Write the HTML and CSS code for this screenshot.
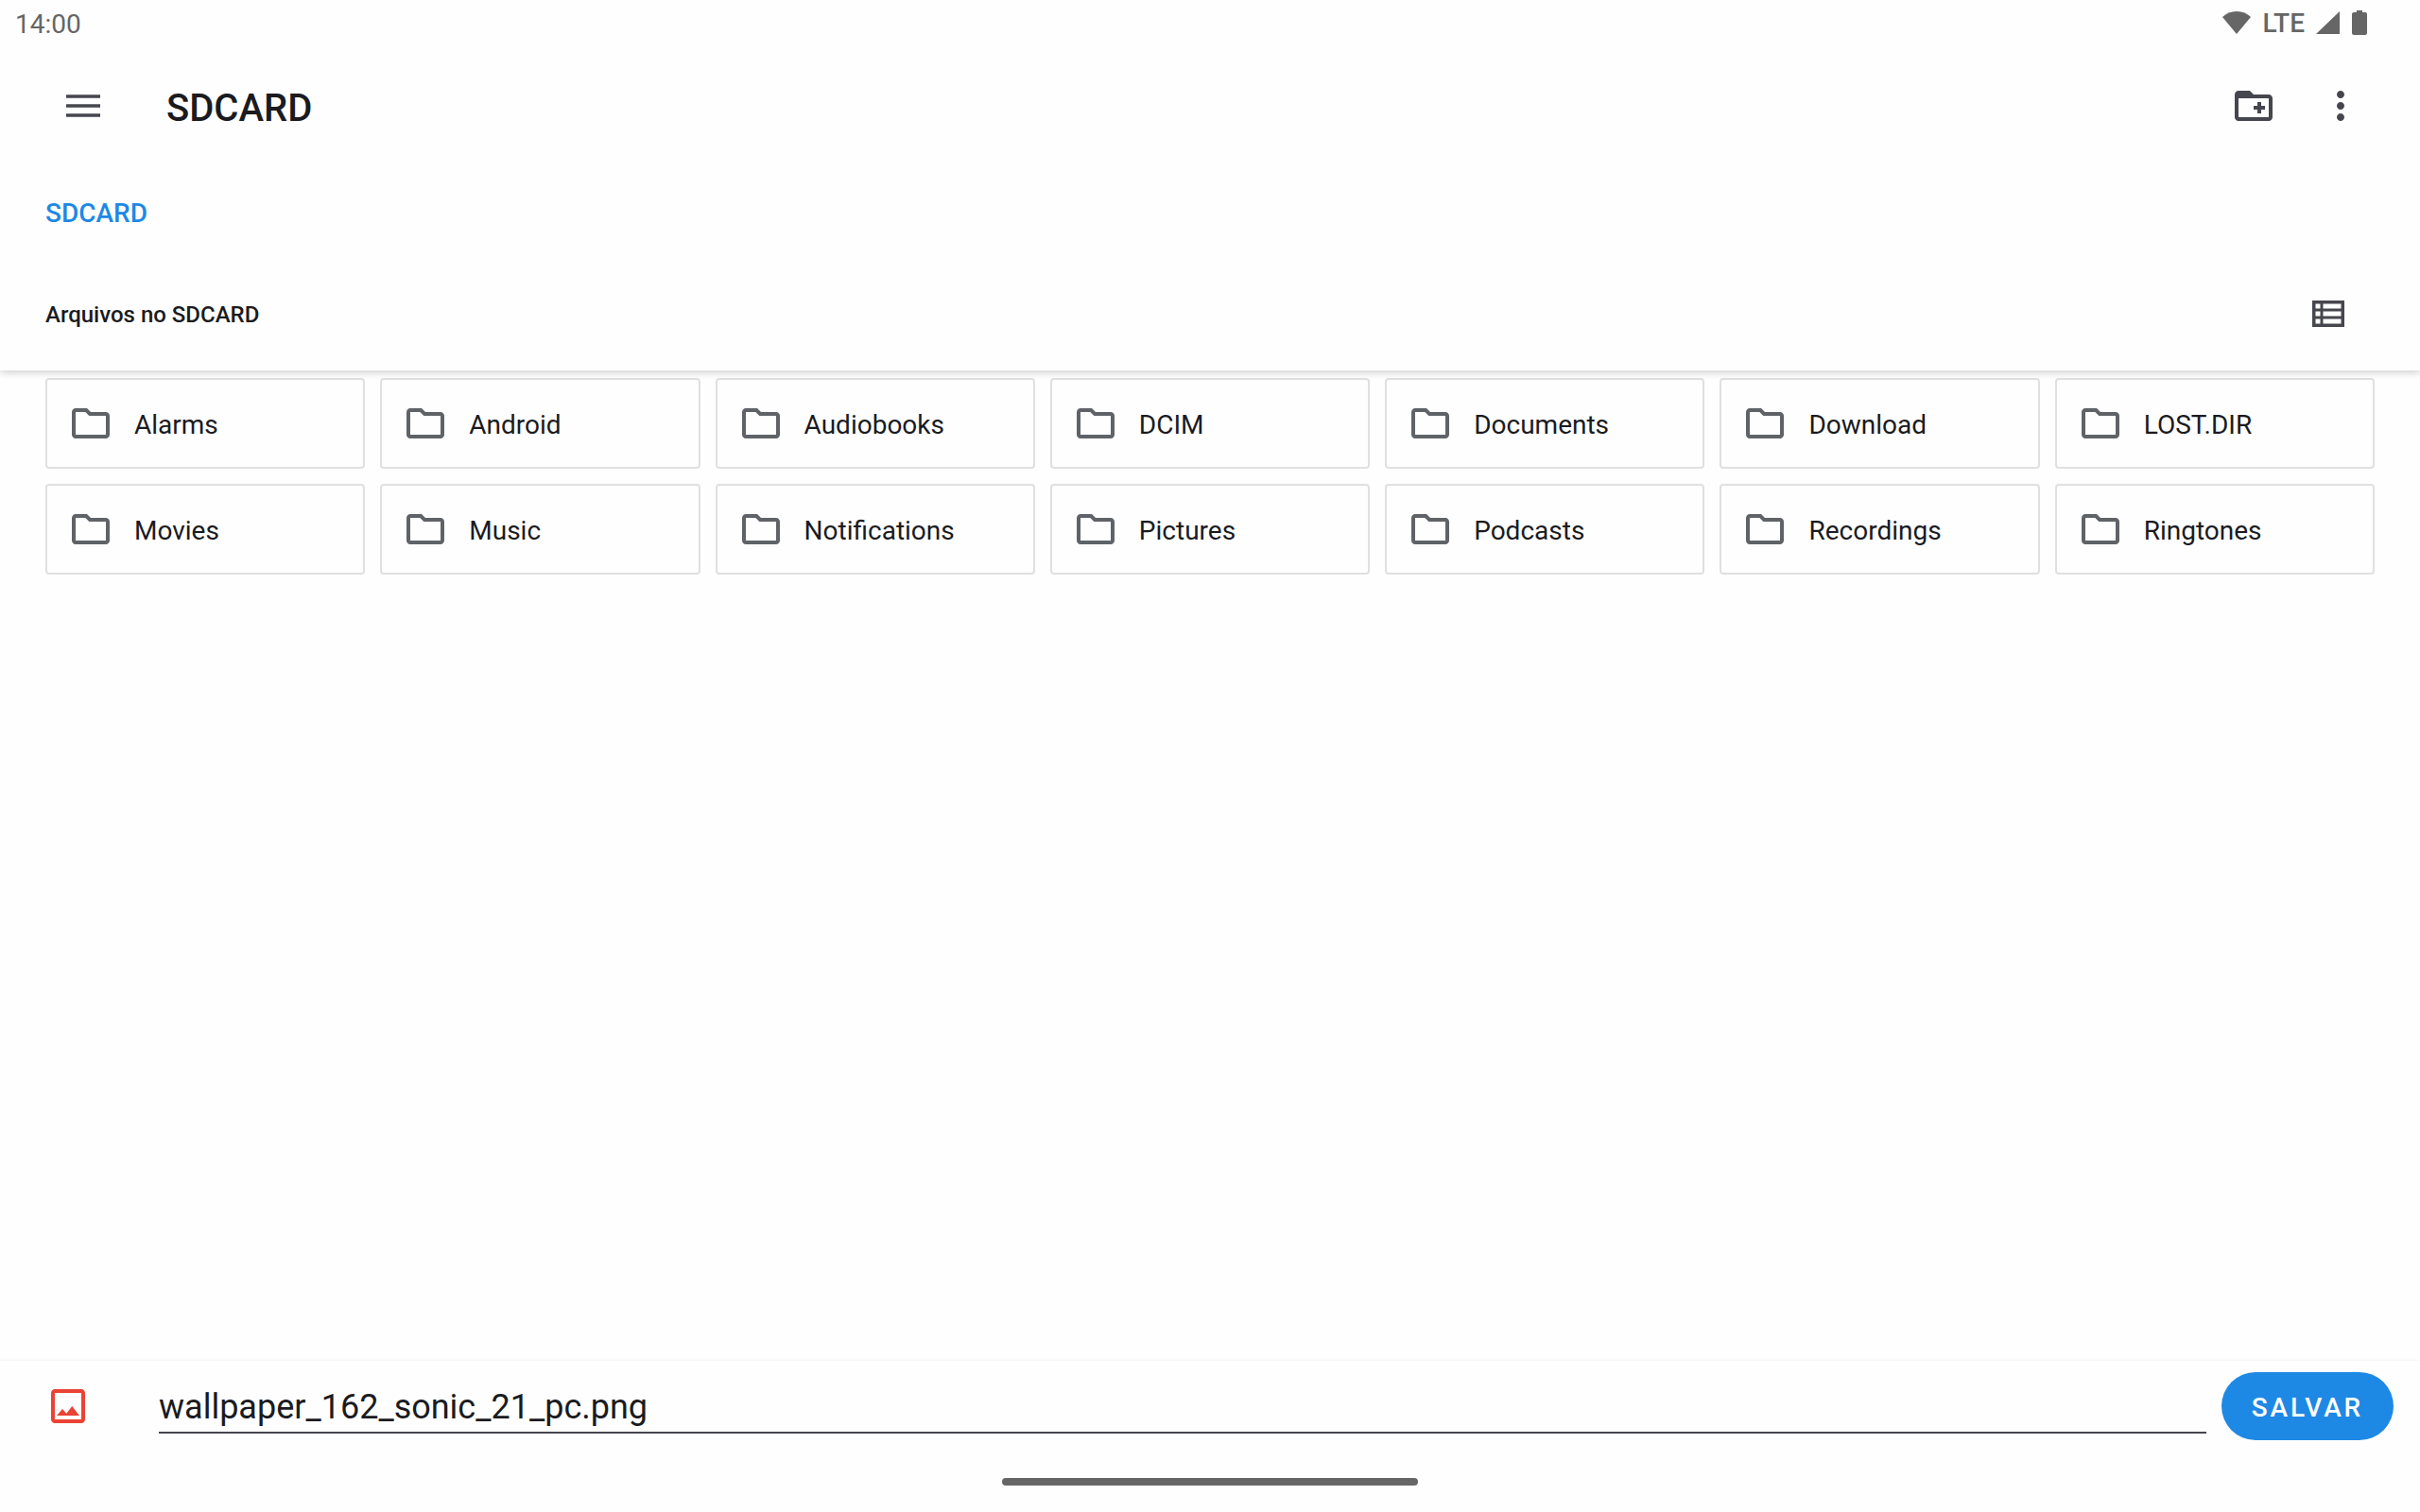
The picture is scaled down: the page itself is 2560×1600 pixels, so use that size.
FILE: index.html
```
<!DOCTYPE html>
<html lang="pt-BR">
<head>
  <meta charset="UTF-8">
  <meta name="viewport" content="width=device-width, initial-scale=1.0">
  <title>SDCARD</title>
  <link rel="stylesheet" href="styles.css">
</head>
<body>
  <svg class="sprite" aria-hidden="true">
    <symbol id="folder" viewBox="0 0 24 24">
      <path d="M9.17 6l2 2H20v10H4V6h5.17M10 4H4c-1.1 0-1.99.9-1.99 2L2 18c0 1.1.9 2 2 2h16c1.1 0 2-.9 2-2V8c0-1.1-.9-2-2-2h-8l-2-2z"/>
    </symbol>
  </svg>

  <header class="top">
    <div class="status-bar">
      <span class="clock">14:00</span>
      <div class="status-icons">
        <svg class="wifi" viewBox="0 0 30 26"><path d="M15 25L0 7C4 3 9 1 15 1s11 2 15 6z"/></svg>
        <span class="network">LTE</span>
        <svg class="signal" viewBox="0 0 26 26"><path d="M25 1v24H0z"/></svg>
        <svg class="battery" viewBox="0 0 16 26"><path d="M5 0h6v2h3a2 2 0 0 1 2 2v20a2 2 0 0 1-2 2H2a2 2 0 0 1-2-2V4a2 2 0 0 1 2-2h3z"/></svg>
      </div>
    </div>

    <div class="toolbar">
      <button class="icon-btn" type="button" aria-label="Menu">
        <svg viewBox="0 0 48 48"><path d="M6 12.300h36v3.400H6zM6 22.300h36v3.400H6zM6 32.300h36v3.400H6z"/></svg>
      </button>
      <h1>SDCARD</h1>
      <div class="toolbar-actions">
        <button class="icon-btn" type="button" aria-label="Nova pasta">
          <svg viewBox="0 0 24 24"><path d="M20 6h-8l-2-2H4c-1.11 0-1.99.89-1.99 2L2 18c0 1.11.89 2 2 2h16c1.11 0 2-.89 2-2V8c0-1.11-.89-2-2-2zm0 12H4V8h16v10zm-8-4h2v2h2v-2h2v-2h-2v-2h-2v2h-2z"/></svg>
        </button>
        <button class="icon-btn" type="button" aria-label="Mais opções">
          <svg viewBox="0 0 24 24"><path d="M12 8c1.1 0 2-.9 2-2s-.9-2-2-2-2 .9-2 2 .9 2 2 2zm0 2c-1.1 0-2 .9-2 2s.9 2 2 2 2-.9 2-2-.9-2-2-2zm0 6c-1.1 0-2 .9-2 2s.9 2 2 2 2-.9 2-2-.9-2-2-2z"/></svg>
        </button>
      </div>
    </div>

    <nav class="breadcrumb">
      <a href="#">SDCARD</a>
    </nav>

    <div class="list-header">
      <h2>Arquivos no SDCARD</h2>
      <button class="view-btn" type="button" aria-label="Ver em lista">
        <svg viewBox="0 0 40 40"><path fill-rule="evenodd" d="M3 6h34v28H3zM6.500 9.500v5h5v-5zM14.500 9.500v5h19v-5zM6.500 17.500v5h5v-5zM14.500 17.500v5h19v-5zM6.500 25.500v5h5v-5zM14.500 25.500v5h19v-5z"/></svg>
      </button>
    </div>
  </header>

  <main class="folders">
    <button class="folder" type="button"><svg><use href="#folder"/></svg><span>Alarms</span></button>
    <button class="folder" type="button"><svg><use href="#folder"/></svg><span>Android</span></button>
    <button class="folder" type="button"><svg><use href="#folder"/></svg><span>Audiobooks</span></button>
    <button class="folder" type="button"><svg><use href="#folder"/></svg><span>DCIM</span></button>
    <button class="folder" type="button"><svg><use href="#folder"/></svg><span>Documents</span></button>
    <button class="folder" type="button"><svg><use href="#folder"/></svg><span>Download</span></button>
    <button class="folder" type="button"><svg><use href="#folder"/></svg><span>LOST.DIR</span></button>
    <button class="folder" type="button"><svg><use href="#folder"/></svg><span>Movies</span></button>
    <button class="folder" type="button"><svg><use href="#folder"/></svg><span>Music</span></button>
    <button class="folder" type="button"><svg><use href="#folder"/></svg><span>Notifications</span></button>
    <button class="folder" type="button"><svg><use href="#folder"/></svg><span>Pictures</span></button>
    <button class="folder" type="button"><svg><use href="#folder"/></svg><span>Podcasts</span></button>
    <button class="folder" type="button"><svg><use href="#folder"/></svg><span>Recordings</span></button>
    <button class="folder" type="button"><svg><use href="#folder"/></svg><span>Ringtones</span></button>
  </main>

  <footer class="bottom">
    <form class="save-bar">
      <label class="file-type" for="filename" aria-label="Nome do arquivo">
        <svg viewBox="0 0 24 24"><path d="M19 5v14H5V5h14m0-2H5c-1.100 0-2 .9-2 2v14c0 1.100.9 2 2 2h14c1.100 0 2-.9 2-2V5c0-1.100-.9-2-2-2z"/><path d="M14.140 12l-3 3.870L9 13.500 6 17h12z"/></svg>
      </label>
      <input class="filename" id="filename" type="text" value="wallpaper_162_sonic_21_pc.png">
      <button class="save-btn" type="button">SALVAR</button>
    </form>
    <div class="home-handle"></div>
  </footer>
</body>
</html>
```

FILE: styles.css
```
* {
  box-sizing: border-box;
}
body {
  font-family: Roboto, sans-serif;
  background-color: #fefefe;
  color: #1b1b1f;
  margin: 0;
  min-height: 100vh;
  display: flex;
  flex-direction: column;
}
h1, h2 {
  margin: 0;
  font-weight: 500;
}
button {
  font-family: inherit;
  color: inherit;
  cursor: pointer;
}
svg {
  display: block;
  fill: currentColor;
}
.sprite {
  display: none;
}

/* header */
.top {
  position: relative;
  background-color: #fefefe;
  box-shadow: 0 2px 8px rgba(0, 0, 0, 0.2);
}
.status-bar {
  display: flex;
  justify-content: space-between;
  align-items: center;
  height: 48px;
  padding: 0 56px 0 16px;
  font-size: 28px;
  color: #666;
}
.status-icons {
  display: flex;
  align-items: center;
  gap: 12px;
}
.clock, .breadcrumb a, .list-header h2, .folder span {
  padding-top: 2px;
}
.network {
  font-weight: 500;
}
.wifi {
  width: 30px;
  height: 26px;
}
.signal {
  width: 26px;
  height: 26px;
}
.battery {
  width: 16px;
  height: 26px;
}
.toolbar {
  display: flex;
  align-items: center;
  height: 128px;
  padding: 0 60px 0 64px;
}
.toolbar h1 {
  margin-left: 64px;
  padding-top: 4px;
  font-size: 40px;
}
.toolbar-actions {
  display: flex;
  gap: 44px;
  margin-left: auto;
}
.icon-btn, .view-btn {
  background: none;
  border: none;
  padding: 0;
  color: #46464f;
}
.icon-btn svg {
  width: 48px;
  height: 48px;
}
.view-btn svg {
  width: 40px;
  height: 40px;
}
.breadcrumb {
  display: flex;
  align-items: center;
  height: 96px;
  padding: 0 48px;
}
.breadcrumb a {
  color: #1e88e5;
  font-size: 28px;
  font-weight: 500;
  text-decoration: none;
}
.list-header {
  display: flex;
  justify-content: space-between;
  align-items: center;
  height: 120px;
  padding: 0 77px 0 48px;
}
.list-header h2 {
  font-size: 24px;
}

/* folder grid */
.folders {
  flex: 1;
  display: grid;
  grid-template-columns: repeat(auto-fill, minmax(320px, 1fr));
  align-content: start;
  gap: 16px;
  padding: 8px 48px;
}
.folder {
  display: flex;
  align-items: center;
  gap: 22px;
  height: 96px;
  padding: 0 22px;
  background: none;
  border: 2px solid #e0e0e0;
  border-radius: 4px;
  font-size: 28px;
}
.folder svg {
  width: 48px;
  height: 48px;
  color: #5f6368;
}

/* save bar */
.bottom {
  background-color: #fefefe;
  box-shadow: 0 0 4px rgba(0, 0, 0, 0.08);
}
.save-bar {
  display: flex;
  align-items: center;
  padding: 12px 28px 12px 48px;
}
.file-type {
  margin-right: 72px;
  color: #ea4335;
}
.file-type svg {
  width: 48px;
  height: 48px;
}
.filename {
  flex: 1;
  min-width: 0;
  height: 58px;
  margin-right: 16px;
  padding: 4px 0 0;
  background: none;
  border: none;
  border-bottom: 2px solid #46464f;
  outline: none;
  font-family: inherit;
  font-size: 36px;
  color: inherit;
}
.save-btn {
  height: 72px;
  padding: 2px 32px 0;
  background-color: #1e88e5;
  border: none;
  border-radius: 36px;
  color: #fff;
  font-size: 28px;
  font-weight: 500;
  letter-spacing: 0.1em;
}
.home-handle {
  width: 440px;
  height: 8px;
  margin: 28px auto;
  border-radius: 4px;
  background-color: #666;
}
```
